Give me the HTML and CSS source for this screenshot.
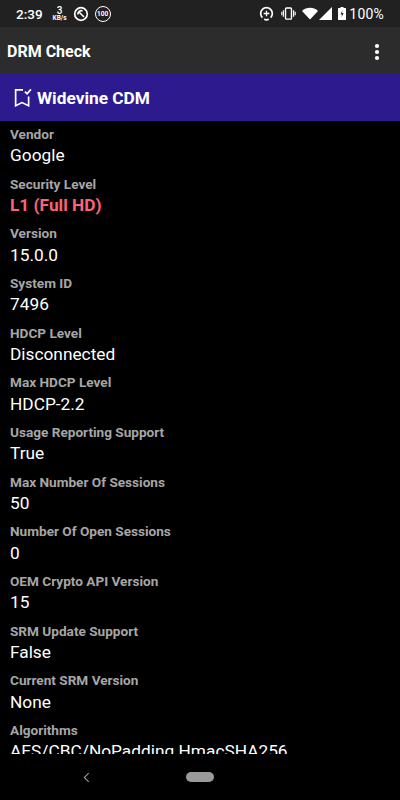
FILE: index.html
```html
<!DOCTYPE html>
<html lang="en">
<head>
<meta charset="utf-8">
<title>DRM Check</title>
<link rel="stylesheet" href="styles.css">
</head>
<body>
<div class="screen">
  <header class="status">
    <div class="status-left">
      <span class="time">2:39</span>
      <span class="speed"><b>3</b><i>KB/s</i></span>
      <svg class="ico14" viewBox="0 0 16 16"><circle cx="8" cy="8" r="6.300" fill="none" stroke="#fff" stroke-width="1.700"/><path d="M5 8.500a3.200 3.200 0 0 1 4.500-3.500M5.500 5.500l5.500 5.500" fill="none" stroke="#fff" stroke-width="1.700"/></svg>
      <span class="hundred">100</span>
    </div>
    <div class="status-right">
      <svg class="saver" viewBox="0 0 16 16"><path d="M3.600 12.400A6.200 6.200 0 1 1 12.400 12.400" fill="none" stroke="#fff" stroke-width="1.800"/><path d="M5.500 14.200a6.200 6.200 0 0 0 5 0" fill="none" stroke="#fff" stroke-width="1.800"/><path d="M8 5v6M5 8h6" stroke="#fff" stroke-width="1.400"/></svg>
      <svg class="vib" viewBox="0 0 16 14"><rect x="4.800" y="1" width="6.400" height="12" rx="1" fill="none" stroke="#fff" stroke-width="1.500"/><path d="M2.500 3.500v7M0.800 5v4M13.500 3.500v7M15.200 5v4" stroke="#fff" stroke-width="1.200"/></svg>
      <svg class="wifi" viewBox="0 0 16 12"><path d="M0 3.400C4.500-.9 11.500-.9 16 3.400L8 12z" fill="#fff"/></svg>
      <svg class="signal" viewBox="0 0 13 13"><path d="M13 0V13H0z" fill="#fff"/></svg>
      <svg class="battery" viewBox="0 0 8 13"><path d="M2.500 0h3v1H7.500a.5.5 0 0 1 .5.5V12.500a.5.5 0 0 1-.5.5H.5a.5.5 0 0 1-.5-.5V1.500A.5.5 0 0 1 .5 1h2z" fill="#fff"/><path d="M4.500 3 2.500 7.500H4L3.500 10.500 5.500 6H4z" fill="#222"/></svg>
      <span class="pct">100%</span>
    </div>
  </header>
  <div class="appbar">
    <h1>DRM Check</h1>
    <svg class="menu" viewBox="0 0 6 18"><circle cx="3" cy="3" r="2.100" fill="#fff"/><circle cx="3" cy="9" r="2.100" fill="#fff"/><circle cx="3" cy="15" r="2.100" fill="#fff"/></svg>
  </div>
  <div class="section">
    <svg class="bookmark" viewBox="0 0 18 18"><path d="M9.500 1.700H2.500V16.800L8.500 13.800 14.800 16.800V8" fill="none" stroke="#fff" stroke-width="1.600"/><path d="M11.300 3.500 13.300 5.500 17 1.300" fill="none" stroke="#fff" stroke-width="1.600"/></svg>
    <h2>Widevine CDM</h2>
  </div>
  <main class="list">
    <div class="item"><div class="label">Vendor</div><div class="value">Google</div></div>
    <div class="item"><div class="label">Security Level</div><div class="value alert">L1 (Full HD)</div></div>
    <div class="item"><div class="label">Version</div><div class="value">15.0.0</div></div>
    <div class="item"><div class="label">System ID</div><div class="value">7496</div></div>
    <div class="item"><div class="label">HDCP Level</div><div class="value">Disconnected</div></div>
    <div class="item"><div class="label">Max HDCP Level</div><div class="value">HDCP-2.2</div></div>
    <div class="item"><div class="label">Usage Reporting Support</div><div class="value">True</div></div>
    <div class="item"><div class="label">Max Number Of Sessions</div><div class="value">50</div></div>
    <div class="item"><div class="label">Number Of Open Sessions</div><div class="value">0</div></div>
    <div class="item"><div class="label">OEM Crypto API Version</div><div class="value">15</div></div>
    <div class="item"><div class="label">SRM Update Support</div><div class="value">False</div></div>
    <div class="item"><div class="label">Current SRM Version</div><div class="value">None</div></div>
    <div class="item"><div class="label">Algorithms</div><div class="value">AES/CBC/NoPadding HmacSHA256</div></div>
  </main>
  <footer class="nav">
    <svg class="back" viewBox="0 0 8 12"><path d="M6.500 1 1.500 6l5 5" fill="none" stroke="#9a9a9a" stroke-width="1.300"/></svg>
    <span class="pill"></span>
  </footer>
</div>
</body>
</html>
```
FILE: styles.css
```css
* { box-sizing: border-box; margin: 0; padding: 0; }
html, body { background: #000; }
body { width: 400px; height: 800px; overflow: hidden; font-family: Roboto, sans-serif; color: #fff; }
.screen { width: 400px; height: 800px; display: flex; flex-direction: column; }
.status { flex: 0 0 27px; background: #212121; display: flex; justify-content: space-between; align-items: center; padding: 0 16px; }
.status-left, .status-right { display: flex; align-items: center; }
.time { font-size: 13.500px; font-weight: 500; color: #fff; }
.speed { display: flex; flex-direction: column; align-items: center; margin: 0 6px 0 10px; line-height: 1; }
.speed b { font-size: 10px; font-weight: 500; line-height: 9px; }
.speed i { font-size: 6.500px; font-style: normal; font-weight: 700; line-height: 7px; }
.ico14 { width: 16px; height: 16px; display: block; }
.hundred { width: 16px; height: 16px; margin-left: 6px; border: 1.500px solid #fff; border-radius: 50%; font-size: 6.500px; font-weight: 700; display: flex; align-items: center; justify-content: center; }
.saver { width: 15px; height: 15px; display: block; }
.vib { width: 15px; height: 13px; margin-left: 7px; }
.wifi { width: 16px; height: 13px; margin-left: 6px; }
.signal { width: 13px; height: 13px; margin-left: 1px; }
.battery { width: 8px; height: 13px; margin-left: 6px; }
.pct { font-size: 14px; margin-left: 3px; font-weight: 400; letter-spacing: .2px; }
.appbar { flex: 0 0 47px; background: #2c2c2c; display: flex; align-items: center; justify-content: space-between; padding: 2px 20px 0 7px; }
.appbar h1 { font-size: 16px; font-weight: 700; }
.menu { width: 6px; height: 18px; display: block; }
.section { flex: 0 0 47px; background: #2d1a8e; display: flex; align-items: center; padding-left: 13px; gap: 5px; }
.bookmark { width: 19px; height: 19px; display: block; }
.section h2 { font-size: 17.300px; font-weight: 700; }
.list { flex: 0 0 633px; overflow: hidden; padding-top: 5px; padding-left: 10px; }
.item { height: 49.670px; }
.label { font-size: 13.600px; font-weight: 700; color: #a6a6a6; line-height: 17px; }
.value { font-size: 17.300px; line-height: 24px; color: #fff; white-space: nowrap; margin-top: 0.400px; }
.alert { color: #f9647b; font-weight: 700; }
.nav { flex: 1; background: #000; position: relative; display: flex; align-items: center; justify-content: center; }
.pill { width: 28px; height: 10px; border-radius: 5px; background: #9a9a9a; }
.back { position: absolute; left: 83px; top: 50%; margin-top: -5.500px; width: 7px; height: 11px; }
```
